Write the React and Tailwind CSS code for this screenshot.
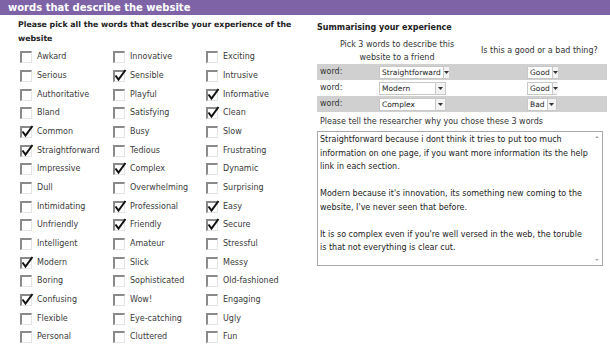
import React from 'react';

const words = [
  ['Awkard', false], ['Innovative', false], ['Exciting', false],
  ['Serious', false], ['Sensible', true], ['Intrusive', false],
  ['Authoritative', false], ['Playful', false], ['Informative', true],
  ['Bland', false], ['Satisfying', false], ['Clean', true],
  ['Common', true], ['Busy', false], ['Slow', false],
  ['Straightforward', true], ['Tedious', false], ['Frustrating', false],
  ['Impressive', false], ['Complex', true], ['Dynamic', false],
  ['Dull', false], ['Overwhelming', false], ['Surprising', false],
  ['Intimidating', false], ['Professional', true], ['Easy', true],
  ['Unfriendly', false], ['Friendly', true], ['Secure', true],
  ['Intelligent', false], ['Amateur', false], ['Stressful', false],
  ['Modern', true], ['Slick', false], ['Messy', false],
  ['Boring', false], ['Sophisticated', false], ['Old-fashioned', false],
  ['Confusing', true], ['Wow!', false], ['Engaging', false],
  ['Flexible', false], ['Eye-catching', false], ['Ugly', false],
  ['Personal', false], ['Cluttered', false], ['Fun', false],
];

const picks = [
  ['Straightforward', 'Good', true],
  ['Modern', 'Good', false],
  ['Complex', 'Bad', true],
];

const Check = ({ on }) => (
  <span className="relative block w-[12px] h-[12px] shrink-0 bg-white border-t-2 border-l-2 border-t-[#8a8a8a] border-l-[#8a8a8a] border-r border-b border-r-[#e4e4e4] border-b-[#e4e4e4]">
    {on && (
      <svg className="absolute -left-[1px] -top-[3px]" width="13" height="13" viewBox="0 0 13 13">
        <path d="M1.5 6.5 L4.5 10.5 L11.5 1" fill="none" stroke="#111" strokeWidth="2" />
      </svg>
    )}
  </span>
);

const Select = ({ value, width }) => (
  <span className={`flex items-stretch h-[13px] bg-white border border-[#c8c8c8] ${width}`}>
    <span className="flex-1 px-[2px] text-[7.5px] leading-[11px] text-[#222]">{value}</span>
    <span className="w-[10px] border-l border-[#c8c8c8] bg-[#f3f3f3] flex items-center justify-center">
      <svg width="5" height="3" viewBox="0 0 5 3">
        <path d="M0 0 L5 0 L2.5 3 Z" fill="#333" />
      </svg>
    </span>
  </span>
);

const App = () => {
  return (
    <div className="w-[610px] h-[361px] bg-white overflow-hidden" style={{ fontFamily: '"DejaVu Sans", Verdana, sans-serif' }}>
      <div className="h-[15px] bg-[#7e64a6] pl-[8px] text-white font-bold text-[10px] leading-[15px]">
        words that describe the website
      </div>
      <div className="flex">
        {/* left column */}
        <div className="w-[300px] pl-[18px] pt-[3px]">
          <p className="font-bold text-[7.8px] leading-[14px] text-[#222] whitespace-nowrap">
            Please pick all the words that describe your experience of the<br />website
          </p>
          <div className="grid grid-cols-[93px_93px_93px] mt-[2px] pl-[2px]">
            {words.map(([w, on]) => (
              <div key={w} className="flex items-center h-[18.67px]">
                <Check on={on} />
                <span className="ml-[5px] text-[8px] text-[#3a3a3a]">{w}</span>
              </div>
            ))}
          </div>
        </div>

        {/* right column */}
        <div className="flex-1 pl-[17px] pr-[3px] pt-[7px]">
          <p className="font-bold text-[8px] leading-[11px] text-[#222]">Summarising your experience</p>
          <div className="flex items-center mt-[5px] text-[8px] text-[#333]">
            <span className="w-[160px] text-center leading-[13px]">Pick 3 words to describe this<br />website to a friend</span>
            <span className="ml-[4px]">Is this a good or a bad thing?</span>
          </div>
          <div>
            {picks.map(([w, g, grey]) => (
              <div key={w} className={`flex items-center h-[16px] text-[8px] text-[#333] ${grey ? 'bg-[#d0d0d0]' : 'bg-white'}`}>
                <span className="w-[62px] pl-[3px]">word:</span>
                <Select value={w} width="w-[67px]" />
                <span className="w-[81px]" />
                <Select value={g} width="w-[30px]" />
              </div>
            ))}
          </div>
          <p className="text-[8px] text-[#333] pl-[3px] mt-[4px] leading-[12px]">Please tell the researcher why you chose these 3 words</p>
          <div className="flex w-[286px] h-[135px] mt-[3px] border border-[#a8a8a8] bg-white">
            <div className="flex-1 px-[2px] pt-[1px] text-[8px] leading-[13.5px] text-[#222]">
              <p>Straightforward because i dont think it tries to put too much information on one page, if you want more information its the help link in each section.</p>
              <p className="mt-[13.5px]">Modern because it's innovation, its something new coming to the website, I've never seen that before.</p>
              <p className="mt-[13.5px]">It is so complex even if you're well versed in the web, the toruble is that not everything is clear cut.</p>
            </div>
            <div className="w-[10px] flex flex-col justify-between items-center py-[4px]">
              <svg width="4" height="2" viewBox="0 0 4 2"><path d="M0 2 L4 2 L2 0 Z" fill="#aaa" /></svg>
              <svg width="4" height="2" viewBox="0 0 4 2"><path d="M0 0 L4 0 L2 2 Z" fill="#aaa" /></svg>
            </div>
          </div>
        </div>
      </div>
    </div>
  );
};

export default App;
